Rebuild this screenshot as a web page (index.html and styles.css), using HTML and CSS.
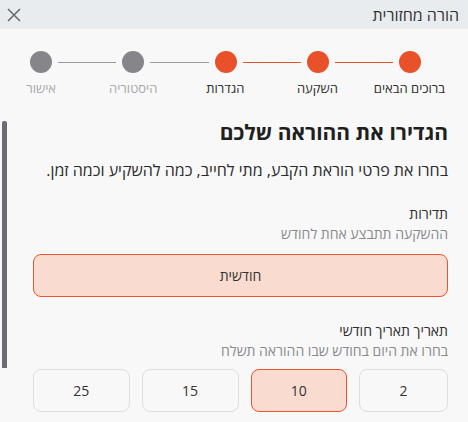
FILE: index.html
```html
<!DOCTYPE html>
<html lang="he" dir="rtl">
<head>
<meta charset="utf-8">
<link rel="stylesheet" href="styles.css">
</head>
<body>
<div class="dialog">
  <header class="titlebar">
    <span class="title">הורה מחזורית</span>
    <button class="close" aria-label="סגור">
      <svg width="14" height="14" viewBox="0 0 14 14"><path d="M1 1 L13 13 M13 1 L1 13" stroke="#6b6b6b" stroke-width="1.6" fill="none"/></svg>
    </button>
  </header>
  <main class="content">
    <div class="scrollthumb"></div>
    <div class="stepper">
      <div class="track">
        <span class="dot active"></span><span class="line active"></span>
        <span class="dot active"></span><span class="line active"></span>
        <span class="dot active"></span><span class="line"></span>
        <span class="dot"></span><span class="line"></span>
        <span class="dot"></span>
      </div>
      <div class="labels">
        <span class="lbl active">ברוכים הבאים</span>
        <span class="lbl active">השקעה</span>
        <span class="lbl active">הגדרות</span>
        <span class="lbl">היסטוריה</span>
        <span class="lbl">אישור</span>
      </div>
    </div>
    <section class="form">
      <h2 class="heading">הגדירו את ההוראה שלכם</h2>
      <p class="intro">בחרו את פרטי הוראת הקבע, מתי לחייב, כמה להשקיע וכמה זמן.</p>
      <div class="field-label first">תדירות</div>
      <div class="field-sub">ההשקעה תתבצע אחת לחודש</div>
      <button class="option wide selected">חודשית</button>
      <div class="field-label second">תאריך תאריך חודשי</div>
      <div class="field-sub">בחרו את היום בחודש שבו ההוראה תשלח</div>
      <div class="days">
        <button class="option day">2</button>
        <button class="option day selected">10</button>
        <button class="option day">15</button>
        <button class="option day">25</button>
      </div>
    </section>
  </main>
</div>
</body>
</html>
```
FILE: styles.css
```css
html, body {
  margin: 0;
  padding: 0;
  overflow: hidden;
}
body {
  width: 468px;
  height: 422px;
  background: #f8f8f8;
  font-family: "Open Sans", "DejaVu Sans", sans-serif;
  color: #2b2b2b;
}
.dialog {
  display: flex;
  flex-direction: column;
  height: 422px;
}
.titlebar {
  height: 29px;
  background: #e9ecef;
  display: flex;
  align-items: center;
  justify-content: space-between;
  padding: 0 9px 0 7px;
}
.title {
  font-size: 16px;
  line-height: 20px;
  color: #333;
}
.close {
  border: 0;
  background: none;
  padding: 0;
  width: 14px;
  height: 14px;
  display: flex;
  align-items: center;
  justify-content: center;
}
.content {
  position: relative;
  flex: 1;
}
.scrollthumb {
  position: absolute;
  left: 2px;
  top: 92px;
  width: 5px;
  height: 247px;
  background: #6c6c72;
  border-radius: 2px 2px 0 0;
}
.stepper {
  padding-top: 22px;
}
.track {
  display: flex;
  align-items: center;
  padding: 0 47px 0 30px;
}
.dot {
  width: 22px;
  height: 22px;
  border-radius: 50%;
  background: #86868a;
  flex: none;
}
.dot.active {
  background: #e9512a;
}
.line {
  flex: 1;
  height: 1px;
  margin: 0 6px;
  background: #9a9a9e;
}
.line.active {
  background: #e9512a;
}
.labels {
  display: grid;
  grid-template-columns: repeat(5, 80px);
  column-gap: 12.1px;
  padding-right: 18.5px;
  margin-top: 7px;
}
.lbl {
  text-align: center;
  font-size: 13px;
  line-height: 16px;
  color: #a9a9ad;
  white-space: nowrap;
}
.lbl.active {
  color: #2e2e2e;
}
.form {
  padding: 0 20px 0 33px;
}
.heading {
  margin: 23px 0 0;
  font-size: 21px;
  line-height: 26px;
  font-weight: 700;
  color: #1f1f1f;
}
.intro {
  margin: 14px 0 0;
  font-size: 16px;
  line-height: 22px;
  color: #2b2b2b;
}
.field-label {
  font-size: 14px;
  line-height: 20px;
  color: #2e2e2e;
}
.field-label.first {
  margin-top: 23px;
}
.field-label.second {
  margin-top: 23.5px;
}
.field-sub {
  font-size: 14px;
  line-height: 18px;
  color: #8a8a8e;
  margin-top: 1px;
}
.option {
  font-family: inherit;
  font-size: 14px;
  color: #333;
  background: #f8f8f8;
  border: 1px solid #dedede;
  border-radius: 8px;
  height: 43px;
  padding: 0 10px;
}
.option.selected {
  background: #fadbd0;
  border-color: #e9552e;
}
.wide {
  display: block;
  width: 100%;
  margin-top: 11px;
}
.days {
  display: flex;
  gap: 12px;
  margin-top: 9.5px;
}
.day {
  flex: 1 1 auto;
}
```
